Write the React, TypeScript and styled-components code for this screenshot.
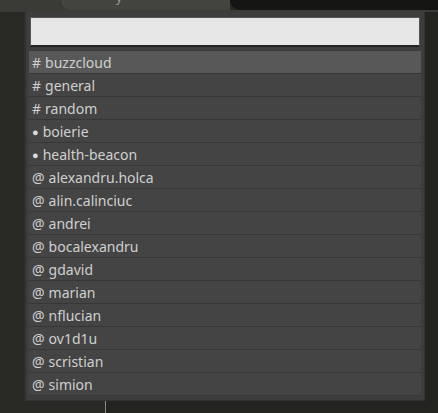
import styled, { createGlobalStyle } from "styled-components";

const GlobalStyle = createGlobalStyle`
  html, body {
    margin: 0;
    padding: 0;
    background: #272723;
  }
  * {
    box-sizing: border-box;
  }
`;

type Item = { prefix: string; name: string };

const items: Item[] = [
  { prefix: "#", name: "buzzcloud" },
  { prefix: "#", name: "general" },
  { prefix: "#", name: "random" },
  { prefix: "●", name: "boierie" },
  { prefix: "●", name: "health-beacon" },
  { prefix: "@", name: "alexandru.holca" },
  { prefix: "@", name: "alin.calinciuc" },
  { prefix: "@", name: "andrei" },
  { prefix: "@", name: "bocalexandru" },
  { prefix: "@", name: "gdavid" },
  { prefix: "@", name: "marian" },
  { prefix: "@", name: "nflucian" },
  { prefix: "@", name: "ov1d1u" },
  { prefix: "@", name: "scristian" },
  { prefix: "@", name: "simion" },
];

function App() {
  return (
    <>
      <GlobalStyle />
      <Page>
        <TabBar>
          <TabStrip>
            <Tab>
              <TabLabel>y</TabLabel>
            </Tab>
          </TabStrip>
          <DarkStrip />
        </TabBar>
        <Workspace>
          <LeftPane />
          <RightPane />
        </Workspace>
        <Popup>
          <SearchInput type="text" />
          <List>
            {items.map((it, i) => (
              <Row key={it.name} selected={i === 0}>
                <Prefix dot={it.prefix === "●"}>{it.prefix}</Prefix>
                {it.name}
              </Row>
            ))}
          </List>
        </Popup>
      </Page>
    </>
  );
}

export default App;

const Page = styled.div`
  position: relative;
  width: 438px;
  height: 413px;
  background: #272723;
  display: flex;
  flex-direction: column;
  overflow: hidden;
`;

const TabBar = styled.div`
  height: 12px;
  display: flex;
  border-bottom: 2px solid #3b3b38;
`;

const TabStrip = styled.div`
  width: 230px;
  background: #3a3a37;
  display: flex;
  padding-left: 62px;
`;

const Tab = styled.div`
  width: 168px;
  height: 10px;
  background: #44443f;
  border-bottom-left-radius: 10px;
  border-left: 1px solid #55554f;
  padding-left: 53px;
  overflow: hidden;
`;

const TabLabel = styled.div`
  font-family: "Noto Sans", sans-serif;
  font-size: 12px;
  line-height: 12px;
  margin-top: -8px;
  color: #9a9a92;
`;

const DarkStrip = styled.div`
  flex: 1;
  background: #141412;
  border-bottom-left-radius: 12px;
`;

const Workspace = styled.div`
  flex: 1;
  display: flex;
`;

const LeftPane = styled.div`
  width: 105px;
  background: #292925;
`;

const RightPane = styled.div`
  flex: 1;
  background: #232320;
  border-left: 1px solid #8a8a84;
`;

const Popup = styled.div`
  position: absolute;
  top: 12px;
  left: 24px;
  width: 401px;
  height: 389px;
  background: #3d3d3d;
  border-left: 2px solid #2f2f2f;
  border-right: 1px solid #333;
  border-bottom: 1px solid #333;
  padding: 5px 4px 0 4px;
  display: flex;
  flex-direction: column;
  gap: 4px;
`;

const SearchInput = styled.input`
  height: 30px;
  width: 390px;
  background: #e6e6e6;
  border: 1px solid #555;
  border-bottom: 2px solid #222;
  border-radius: 1px;
  outline: none;
`;

const List = styled.div`
  display: flex;
  flex-direction: column;
  width: 392px;
  margin-left: -1px;
`;

const Row = styled.div<{ selected?: boolean }>`
  height: 23px;
  display: flex;
  align-items: center;
  gap: 4px;
  padding-left: 3px;
  background: ${(p) => (p.selected ? "#585858" : "#444444")};
  border-bottom: 1px solid #373737;
  font-family: "Noto Sans", sans-serif;
  font-size: 14px;
  color: #d0d0d0;
`;

const Prefix = styled.span<{ dot?: boolean }>`
  font-size: ${(p) => (p.dot ? "11px" : "14px")};
  color: ${(p) => (p.dot ? "#dcdcdc" : "#d0d0d0")};
`;
